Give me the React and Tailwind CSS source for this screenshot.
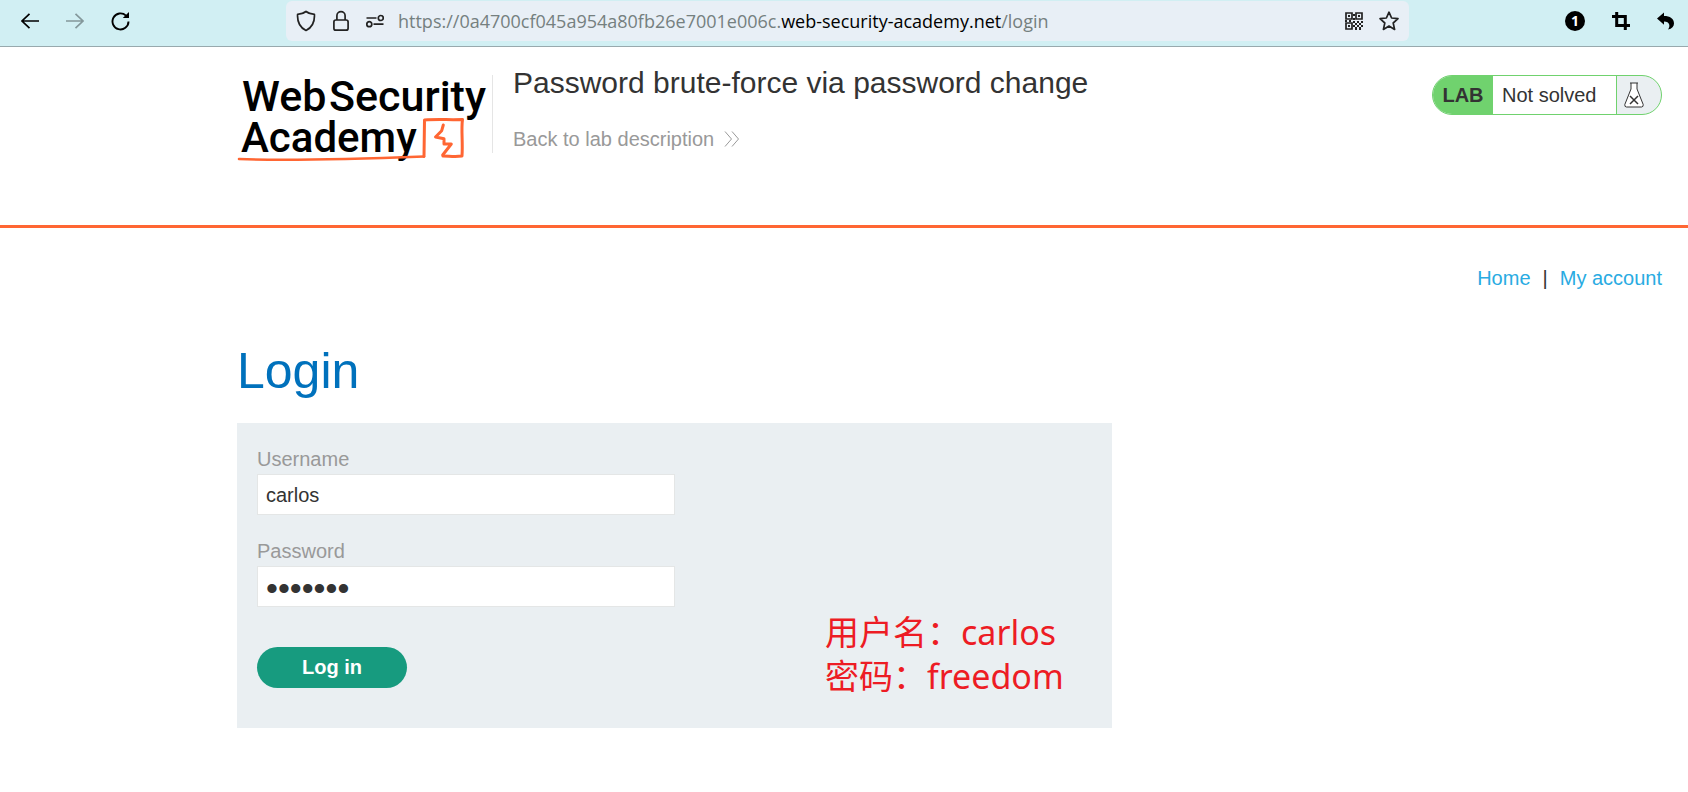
function ShieldIcon() {
  return (
    <svg width="20" height="22" viewBox="0 0 20 22" fill="none" stroke="#222" strokeWidth="1.7" strokeLinejoin="round" aria-hidden="true">
      <path d="M10 1.5C8 3.2 5 4.2 1.6 4.4C1.3 9 2 16.500 10 20.500C18 16.500 18.700 9 18.400 4.400C15 4.200 12 3.200 10 1.500Z" />
    </svg>
  )
}

function LockIcon() {
  return (
    <svg width="16" height="22" viewBox="0 0 16 22" fill="none" stroke="#222" strokeWidth="1.7" aria-hidden="true">
      <rect x="0.9" y="10" width="14.200" height="10.200" rx="2" />
      <path d="M3.900 10V5.800a4.100 4.100 0 0 1 8.200 0V10" />
    </svg>
  )
}

function PermissionsIcon() {
  return (
    <svg width="18" height="14" viewBox="0 0 18 14" fill="none" stroke="#222" strokeWidth="1.7" aria-hidden="true">
      <path d="M0.500 4H10.500M7.500 10.200H17.500" />
      <circle cx="14.800" cy="4" r="2.500" />
      <circle cx="3.300" cy="10.200" r="2.500" />
    </svg>
  )
}

function ArrowIcon({ flip }) {
  return (
    <svg width="18" height="16" viewBox="0 0 18 16" fill="none" stroke="currentColor" strokeWidth="1.7" aria-hidden="true">
      {flip ? <path d="M0 8H17M9.500 0.800L17 8L9.500 15.200" /> : <path d="M18 8H1M8.500 0.800L1 8L8.500 15.200" />}
    </svg>
  )
}

function ReloadIcon() {
  return (
    <svg width="20" height="20" viewBox="0 0 20 20" aria-hidden="true">
      <path d="M15 4.600A8 8 0 1 0 17.500 10.500" fill="none" stroke="#000" strokeWidth="1.900" />
      <path d="M18 1V7H11.800Z" fill="#000" />
    </svg>
  )
}

function QrIcon() {
  return (
    <svg width="18" height="18" viewBox="0 0 18 18" fill="none" stroke="#222" aria-hidden="true">
      <path d="M1 1h6v6H1zM11 1h6v6h-6zM1 11h6v6H1z" strokeWidth="1.700" />
      <path d="M3 3h2v2H3zM13 3h2v2h-2zM3 13h2v2H3zM8 2h2v2H8zM8 6h2v2H8zM0 8h2v2H0zM4 8h2v2H4zM8 9h2v2H8zM12 9h2v2h-2zM16 9h2v2h-2zM10 11h2v2h-2zM14 11h2v2h-2zM8 13h2v2H8zM12 13h2v2h-2zM16 13h2v2h-2zM10 15h2v3h-2zM14 15h2v3h-2z" fill="#222" stroke="none" />
    </svg>
  )
}

function StarIcon() {
  return (
    <svg width="20" height="20" viewBox="0 0 20 20" fill="none" stroke="#222" strokeWidth="1.700" strokeLinejoin="round" aria-hidden="true">
      <path d="M10 1.200L12.600 7L19 7.700L14.200 12L15.600 18.400L10 15.100L4.400 18.400L5.800 12L1 7.700L7.400 7Z" />
    </svg>
  )
}

function CropIcon() {
  return (
    <svg width="18" height="18" viewBox="0 0 18 18" fill="none" stroke="#000" strokeWidth="3" aria-hidden="true">
      <path d="M0 4.600H13.300V18M4.700 0V13.400H18" />
    </svg>
  )
}

function UndoIcon() {
  return (
    <svg width="18" height="18" viewBox="0 0 18 18" fill="#000" aria-hidden="true">
      <path d="M0 6.500L7 0.500V4C13 4 17 6.500 17 11.500C17 14.500 15 16.800 11 17.500C13.500 14.500 13 9.500 7 9.500V12.800Z" />
    </svg>
  )
}

function AcademyLogo() {
  return (
    <svg width="250" height="92" viewBox="0 0 250 92" role="img" aria-label="Web Security Academy" className="shrink-0">
      <g fill="#000" fontFamily="Roboto, sans-serif" fontWeight="500" fontSize="43">
        <text x="5" y="36">Web</text>
        <text x="92" y="36">Security</text>
        <text x="4" y="77" fontSize="42">Academy</text>
      </g>
      <g fill="none" stroke="#ff6633" strokeLinecap="round" strokeLinejoin="round">
        <path d="M2 84C40 85.500 120 84 187 81.500" strokeWidth="2.600" />
        <path d="M187 81.500L187.500 45C200 44 212 45 225.500 44.500C224 55 226 67 225 81C218 82 212 81 206 81" strokeWidth="3" />
        <path d="M206.300 50L204.700 55.700L198.500 62L207 63.700L207 69L214.300 69L205.700 80" strokeWidth="3" />
      </g>
    </svg>
  )
}

function FlaskIcon() {
  return (
    <svg width="20" height="26" viewBox="0 0 20 26" fill="#fff" stroke="#333" strokeWidth="1" aria-hidden="true">
      <path d="M6 1H14M7 1V7L0.800 22.500Q0.500 25 2.500 25H17.500Q19.500 25 19.200 22.500L13 7V1" />
      <path d="M6 14L14 22M14 14L6 22" strokeWidth="1.500" />
    </svg>
  )
}

function Field({ id, label, children }) {
  return (
    <div className="flex flex-col">
      <label htmlFor={id} className="text-xl leading-[30px] text-[#999]">{label}</label>
      {children}
    </div>
  )
}

const inputBox = 'h-[41px] w-full max-w-[418px] border border-[#e4e6e6] bg-white px-2 text-[#333] outline-none'

export default function App() {
  return (
    <div className="bg-white font-['Liberation_Sans',Arial,sans-serif] text-xl text-[#333]">
      <div className="flex h-[47px] items-start border-b border-[#98a9ad] bg-[#d1eff3] pt-px">
        <div className="flex h-10 w-[286px] shrink-0 items-center gap-[27px] pl-[21px] text-black">
          <button type="button" aria-label="Back"><ArrowIcon /></button>
          <button type="button" aria-label="Forward" className="text-[#84989b]"><ArrowIcon flip /></button>
          <button type="button" aria-label="Reload"><ReloadIcon /></button>
        </div>
        <div className="flex h-10 grow items-center rounded-md bg-[#e8eff6] px-2.5">
          <div className="flex items-center gap-[17px]">
            <ShieldIcon />
            <LockIcon />
            <PermissionsIcon />
          </div>
          <p className="ml-3.5 grow font-['Open_Sans',sans-serif] text-lg whitespace-nowrap text-[#75807f]">
            https://0a4700cf045a954a80fb26e7001e006c.<span className="text-black">web-security-academy.net</span>/login
          </p>
          <div className="flex items-center gap-4">
            <button type="button" aria-label="QR code"><QrIcon /></button>
            <button type="button" aria-label="Bookmark"><StarIcon /></button>
          </div>
        </div>
        <div className="flex h-10 w-[279px] shrink-0 items-center justify-end gap-[27px] pr-[13px]">
          <button type="button" className="flex size-5 items-center justify-center rounded-full bg-black font-['Open_Sans',sans-serif] text-sm font-bold text-white">1</button>
          <button type="button" aria-label="Crop"><CropIcon /></button>
          <button type="button" aria-label="Undo"><UndoIcon /></button>
        </div>
      </div>

      <header className="flex h-[181px] items-start border-b-3 border-[#ff6633] pt-7 pr-[26px] pl-[237px]">
        <AcademyLogo />
        <div className="ml-[5px] flex h-[78px] grow border-l border-[#e5e5e5] pl-5">
          <div className="-mt-3 flex flex-col items-start">
            <h1 className="text-[30px] leading-10">Password brute-force via password change</h1>
            <a href="#description" className="mt-[22px] flex items-center gap-2.5 leading-7 text-[#999]">
              Back to lab description
              <svg width="16" height="16" viewBox="0 0 16 16" fill="none" stroke="#999" strokeWidth="1" aria-hidden="true">
                <path d="M1 0.500L7.500 8L1 15.500M8 0.500L14.500 8L8 15.500" />
              </svg>
            </a>
          </div>
        </div>
        <div className="flex h-10 w-[230px] shrink-0 overflow-hidden rounded-full border border-[#70d26e] bg-[#eaeff2]">
          <span className="flex w-[60px] items-center justify-center bg-[#70d26e] font-bold">LAB</span>
          <span className="flex grow items-center border-r border-[#70d26e] bg-white pl-[9px]">Not solved</span>
          <span className="flex w-11 items-center pl-[7px]"><FlaskIcon /></span>
        </div>
      </header>

      <main className="pr-[26px] pl-[237px]">
        <nav className="flex justify-end gap-3 pt-9 leading-7">
          <a href="#home" className="text-[#29abe2]">Home</a>
          <span>|</span>
          <a href="#account" className="text-[#29abe2]">My account</a>
        </nav>
        <h2 className="mt-[49px] text-[50px] leading-[60px] text-[#0071bc]">Login</h2>
        <form className="relative mt-[22px] flex max-w-[875px] flex-col gap-[21px] bg-[#eaeff2] px-5 pt-[21px] pb-10" onSubmit={(e) => e.preventDefault()}>
          <Field id="username" label="Username">
            <input id="username" type="text" defaultValue="carlos" className={`${inputBox} pt-0.5 text-xl`} />
          </Field>
          <Field id="password" label="Password">
            <input id="password" type="password" defaultValue="freedom" className={`${inputBox} pt-1 text-[34px] leading-9`} />
          </Field>
          <button type="submit" className="mt-[19px] h-[41px] w-[150px] rounded-full bg-[#179b7f] pb-0.5 font-bold text-white">Log in</button>
          <p className="absolute right-[50px] bottom-[30px] w-[237px] font-['Noto_Sans','Noto_Sans_CJK_SC',sans-serif] text-[34px] leading-11 whitespace-nowrap text-[#ed1c24]">
            用户名：carlos<br />密码：freedom
          </p>
        </form>
      </main>
    </div>
  )
}
